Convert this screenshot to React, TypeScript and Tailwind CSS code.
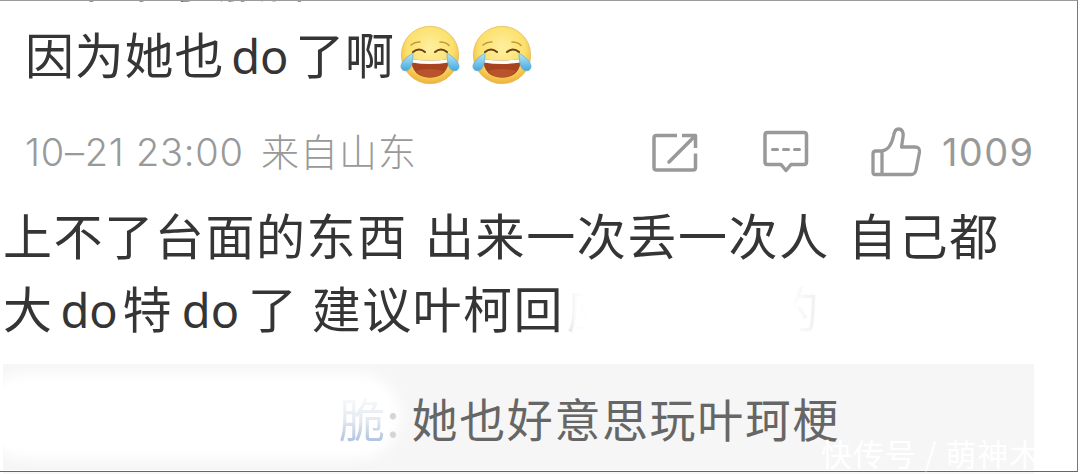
import type { ReactNode } from 'react'

const cjk = "font-['Noto_Sans_CJK_SC',sans-serif]"

function Latin({ children, className = '' }: { children: ReactNode; className?: string }) {
  return (
    <span className={`inline-block text-[47px] tracking-normal font-['Noto_Sans',sans-serif] ${className}`}>
      {children}
    </span>
  )
}

function JoyEmoji({ id }: { id: string }) {
  return (
    <svg viewBox="0 0 60 60" className="h-[60px] w-[60px] shrink-0">
      <defs>
        <radialGradient id={`face-${id}`} cx="50%" cy="38%" r="62%">
          <stop offset="0" stopColor="#fff0a0" />
          <stop offset="0.65" stopColor="#fbe06c" />
          <stop offset="1" stopColor="#edb23b" />
        </radialGradient>
        <linearGradient id={`tear-${id}`} x1="0" y1="0" x2="0" y2="1">
          <stop offset="0" stopColor="#b9e6f5" />
          <stop offset="1" stopColor="#43a8df" />
        </linearGradient>
      </defs>
      <circle cx="30" cy="30" r="28.7" fill={`url(#face-${id})`} stroke="#e2b556" strokeWidth="0.7" />
      <path d="M11 20q4-3.500 9-3M40 17q6 0 9 3.500" fill="none" stroke="#c69a3b" strokeWidth="1.600" strokeLinecap="round" />
      <path d="M13 27q6-5 12 0M35 27q6-5 12 0" fill="none" stroke="#68401b" strokeWidth="2" strokeLinecap="round" />
      <path d="M11 34q19 3 38 0Q48 52.500 30 52.500T11 34z" fill="#a8431f" />
      <path d="M11 34q19 3 38 0l-.5 3.500q-18.500 3-37 0z" fill="#fffdf6" />
      <path d="M16 46q14-4 28 0-5 6.500-14 6.500t-14-6.500z" fill="#b9532b" />
      <path d="M12.500 28.500C10 30 2 35 1 40.500c-.5 4.500 3.500 6.500 7 4.500 4-2 5-9.500 5-16.500z" fill={`url(#tear-${id})`} stroke="#58acd6" strokeWidth="0.7" />
      <path d="M47.500 28.500C50 30 58 35 59 40.500c.5 4.500-3.500 6.500-7 4.500-4-2-5-9.500-5-16.500z" fill={`url(#tear-${id})`} stroke="#58acd6" strokeWidth="0.7" />
    </svg>
  )
}

function ShareIcon() {
  return (
    <svg viewBox="0 0 46 40" className="h-10 w-[46px]" fill="none" stroke="#999" strokeWidth="3.500" strokeLinecap="round" strokeLinejoin="round">
      <path d="M25 3.500H4.500Q2 3.500 2 6v29.500Q2 38 4.500 38h36.500Q43.500 38 43.500 35.500V21.500" strokeLinecap="butt" />
      <path d="M30 3.500h13.500V16" strokeLinecap="butt" />
      <path d="M42 5L17 30" />
    </svg>
  )
}

function CommentIcon() {
  return (
    <svg viewBox="0 0 46 44" className="h-11 w-[46px]" fill="none" stroke="#999" strokeWidth="3.500" strokeLinecap="round" strokeLinejoin="round">
      <path d="M4.500 2.500h36.500q2.500 0 2.500 2.500v27q0 2.500-2.500 2.500H28l-5 6-5-6H4.500Q2 34.500 2 32V5q0-2.500 2.500-2.500z" />
      <path d="M9.500 19.500h5M20.500 19.500h5M31.500 19.500h5" strokeWidth="3" />
    </svg>
  )
}

function LikeIcon() {
  return (
    <svg viewBox="0 0 52 50" className="h-[50px] w-[52px]" fill="none" stroke="#999" strokeWidth="3.300" strokeLinejoin="round">
      <path d="M12 24C19 23 22 16 23.500 9c.8-5 2.500-7 5-7 4 0 5.200 4 4.500 8L31.500 20H45q5 0 4.500 5L46 43q-1 4.500-5 4.500H5Q3 47.500 3 45V27q0-3 3-3h6v23" />
    </svg>
  )
}

export default function App() {
  return (
    <div className={`relative h-[474px] w-[1080px] overflow-hidden bg-white text-[#353535] ${cjk}`}>
      <div className="flex h-[472px] w-[1078px] flex-col border-t border-r border-b border-t-[#9b9b9b] border-r-[#777] border-b-[#666]">
        <div className="h-[3px] shrink-0 overflow-hidden pl-[17px]">
          <p className="-mt-[55px] text-[49px] leading-[60px] whitespace-nowrap tracking-[1px]">您中中了服部</p>
        </div>

        <div className="flex h-[102px] shrink-0 items-center pl-[25px]">
          <p className="pb-[2px] text-[49px] leading-[72px] whitespace-nowrap tracking-[0.8px]">
            因为她也<Latin className="ml-[7px] w-[64px]">do</Latin>了啊
          </p>
          <div className="ml-[5px] flex gap-3">
            <JoyEmoji id="a" />
            <JoyEmoji id="b" />
          </div>
        </div>

        <div className="flex h-[92px] shrink-0 items-center pl-[25px] text-[#999]">
          <p className="w-[236px] whitespace-nowrap font-['Inter',sans-serif] text-[38px] font-light leading-[50px] tracking-[0.75px]">
            10–21 23:00
          </p>
          <p className="pb-1 text-[38px] font-light leading-[50px] whitespace-nowrap tracking-[1px]">来自山东</p>
          <div className="ml-auto flex items-center pr-[43px]">
            <ShareIcon />
            <div className="ml-[65px]"><CommentIcon /></div>
            <div className="ml-[61px]"><LikeIcon /></div>
            <span className="ml-5 w-[92px] whitespace-nowrap font-['Inter',sans-serif] text-[38px] leading-[50px] tracking-[1.4px]">1009</span>
          </div>
        </div>

        <div className="-mt-px h-[167px] shrink-0 pl-[3px] text-[49px] leading-[73px] whitespace-nowrap">
          <p className="flex tracking-[1.6px]">
            <span className="w-[422px]">上不了台面的东西</span>
            <span className="w-[423px]">出来一次丢一次人</span>
            <span>自己都</span>
          </p>
          <p className="flex h-[73px] items-baseline tracking-[1.4px]">
            <span>大</span>
            <Latin className="ml-[7px] w-[62px]">do</Latin>
            <span>特</span>
            <Latin className="ml-[9px] w-[66px]">do</Latin>
            <span className="w-[64px]">了</span>
            <span>建议叶柯回</span>
            <span className="ml-[3px] w-[203px] bg-linear-to-r from-[#ddd] via-[#fafafa] via-4% to-white to-10% bg-clip-text text-transparent">应</span>
            <span className="bg-linear-to-r from-white from-40% to-[#eee] bg-clip-text text-transparent">的</span>
          </p>
        </div>

        <div className="relative ml-[3px] flex h-[106px] w-[1031px] shrink-0 items-center overflow-hidden bg-[#f6f6f6] pl-[336px] text-[46px] text-[#666]">
          <div className="absolute top-[9px] -left-5 h-[86px] w-[418px] rounded-[45px] bg-white blur-[7px]" />
          <p className="relative flex whitespace-nowrap leading-[66px] tracking-[1.6px]">
            <span className="bg-linear-to-t from-[#b3c5e0] from-15% via-[#e3e9f1] via-45% to-[#f6f8fa] to-75% bg-clip-text text-transparent">脆</span>
            <span className="w-[25px] text-[#d2d6db]">:</span>
            <span>她也好意思玩叶珂梗</span>
          </p>
        </div>
      </div>
      <div className="ml-[3px] h-[2px] w-[1031px] bg-[#f8f8f8]" />
      <p className="absolute top-[431px] left-[821px] text-[31px] leading-[43px] whitespace-nowrap text-white tracking-[0.9px]">
        快传号 / 萌神木
      </p>
    </div>
  )
}
